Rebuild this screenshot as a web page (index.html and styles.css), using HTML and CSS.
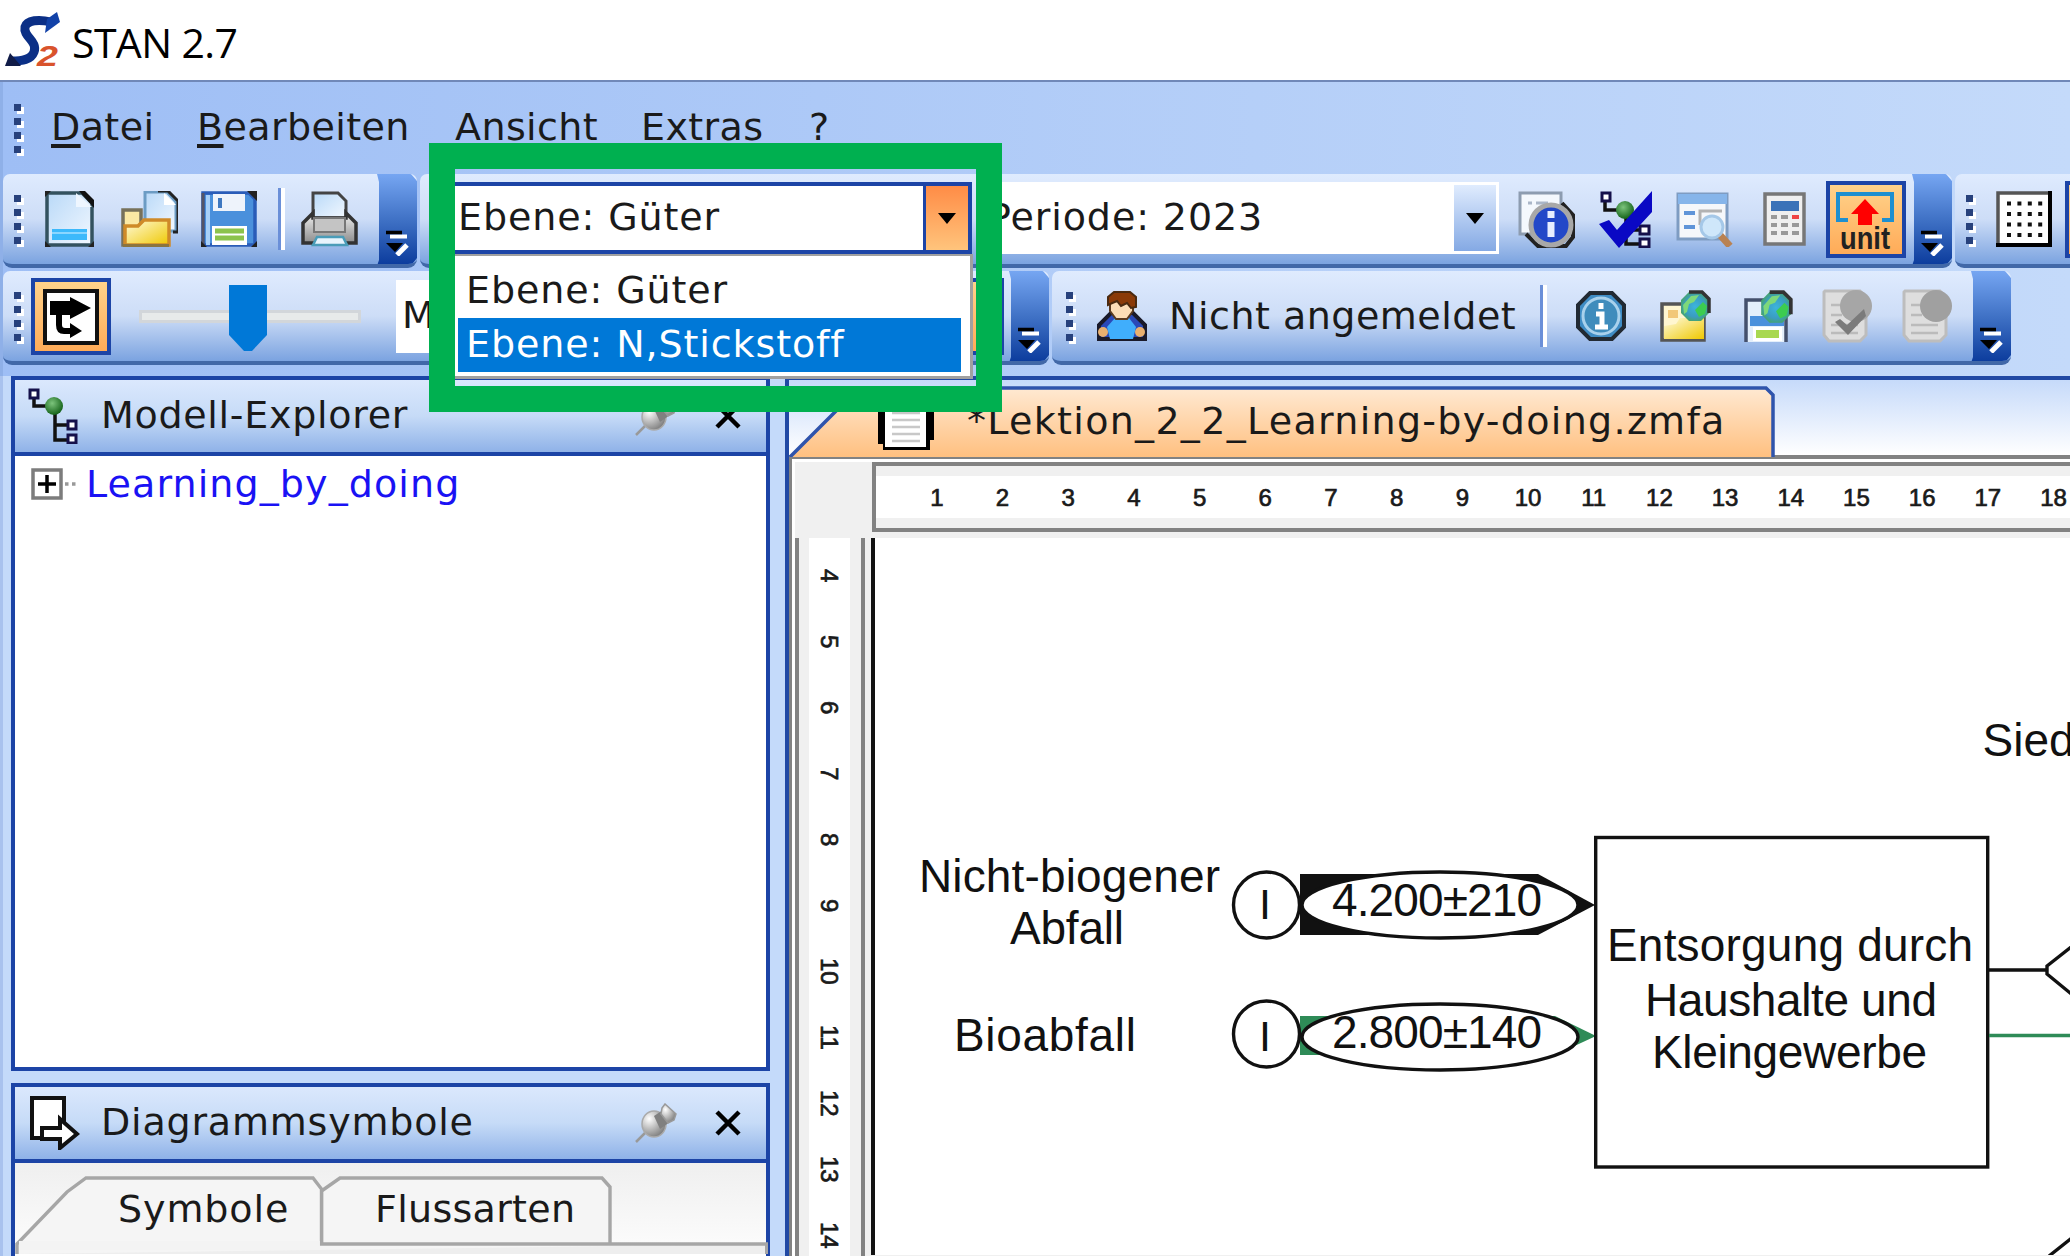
FILE: index.html
```html
<!DOCTYPE html>
<html lang="de">
<head>
<meta charset="utf-8">
<title>STAN 2.7</title>
<link rel="stylesheet" href="styles.css">
</head>
<body>
<svg class="defs" width="0" height="0" aria-hidden="true">
  <defs>
    <linearGradient id="paper" x1="0" y1="0" x2="1" y2="1"><stop offset="0" stop-color="#b9d9f8"/><stop offset="1" stop-color="#f2f8ff"/></linearGradient>
    <linearGradient id="yellow" x1="0" y1="0" x2="1" y2="1"><stop offset="0" stop-color="#fffbe0"/><stop offset="1" stop-color="#efc800"/></linearGradient>
    <linearGradient id="metal" x1="0" y1="0" x2="0" y2="1"><stop offset="0" stop-color="#f0f0f0"/><stop offset="1" stop-color="#8c8c8c"/></linearGradient>
    <radialGradient id="green" cx=".4" cy=".35" r=".7"><stop offset="0" stop-color="#7cc47c"/><stop offset="1" stop-color="#0d5c12"/></radialGradient>
    <radialGradient id="globe" cx=".5" cy=".5" r=".6"><stop offset="0" stop-color="#3cb4dc"/><stop offset=".6" stop-color="#3a9cc0"/><stop offset="1" stop-color="#4aa848"/></radialGradient>
    <radialGradient id="silver" cx=".3" cy=".3" r=".8"><stop offset="0" stop-color="#fff"/><stop offset="1" stop-color="#777"/></radialGradient>
  </defs>
  <symbol id="pin" viewBox="0 0 42 40">
    <path d="M1 39 12 28" stroke="#999" stroke-width="2.5"/>
    <ellipse cx="19" cy="21" rx="12" ry="13" fill="url(#silver)" stroke="#aaa" stroke-width="1.5"/>
    <path d="M19 13 28 7l7 12-10 7z" fill="#808080"/>
    <path d="M27 5 30 1 41 11 39 17 33 20 26 11z" fill="url(#silver)" stroke="#999" stroke-width="1.5"/>
  </symbol>
  <symbol id="close" viewBox="0 0 28 26"><path d="M3 2 25 24M25 2 3 24" stroke="#000" stroke-width="4.500"/></symbol>
  <symbol id="tree" viewBox="0 0 50 56">
    <path d="M6 10V18H24M27 20V52H40M27 37H40" fill="none" stroke="#111" stroke-width="3.5"/>
    <path d="M2 2h8v8h-8zM40 33h8v8h-8zM40 47h8v8h-8z" fill="#fff" stroke="#15104a" stroke-width="3"/>
    <circle cx="26" cy="18" r="9" fill="url(#green)"/>
  </symbol>
  <symbol id="globe-s" viewBox="0 0 32 34">
    <path d="M10 2h13l7 7v14l-8 8H10L2 23V10z" fill="url(#globe)"/>
    <path d="M10 2h13l7 7v14" fill="none" stroke="#333" stroke-width="3.500"/>
    <path d="M4 15 12 6l8-1-5 7-5 2-2 8-3 2z" fill="#7ed87a"/><path d="M16 20l8-8 4 4-2 8-6 3z" fill="#3ccc50"/>
  </symbol>
  <symbol id="more" viewBox="0 0 24 26"><path d="M5 6.500H22" stroke="#fff" stroke-width="4"/><path d="M1 2.500H17" stroke="#000" stroke-width="3.500"/><path d="M12 25 22 15" stroke="#fff" stroke-width="5"/><path d="M1 13H18L10 22z"/></symbol>
</svg>

<header class="titlebar">
  <svg class="logo" width="58" height="56" viewBox="0 0 58 56">
    <path d="M46 10C34 7 22 8 20 15c-2 10 13 14 9 25-3 8-12 9-22 9" fill="none" stroke="#0b2f86" stroke-width="9"/>
    <path d="M52 0 55 10 40 21 42 7z" fill="#1242a8"/>
    <path d="M0 54 5 41 16 54z" fill="#111c48"/>
    <text class="logo-digit" x="32" y="54" textLength="21" lengthAdjust="spacingAndGlyphs">2</text>
  </svg>
  <h1 class="title">STAN 2.7</h1>
</header>

<div class="dock">
  <nav class="menu">
    <span class="grip"><i></i><i></i><i></i><i></i></span>
    <span class="m m-file"><u>D</u>atei</span>
    <span class="m m-edit"><u>B</u>earbeiten</span>
    <span class="m m-view">Ansicht</span>
    <span class="m m-extra">Extras</span>
    <span class="m m-help"><u>?</u></span>
  </nav>

  <div class="row">
    <section class="bar bar-file">
      <span class="grip"><i></i><i></i><i></i><i></i></span>
      <svg class="i-new" width="49" height="56" viewBox="0 0 49 56">
        <path d="M2 2H37L47 12V54H2z" fill="url(#paper)" stroke="#33525f" stroke-width="3.5"/>
        <path d="M31 2V16H47z" fill="#eef6ff"/><path d="M34 0h6l9 9v8z" fill="#111"/>
        <path d="M7 38H42V49H7z" fill="#3cb9fb"/><path d="M7 42H42" stroke="#8ad6ff" stroke-width="2"/>
        <path d="M0 0h6l-6 6zM0 56v-6l6 6zM49 56h-6l6-6z" fill="#222"/>
      </svg>
      <svg class="i-open" width="57" height="56" viewBox="0 0 57 56">
        <path d="M24 1H46L55 11V40H24z" fill="url(#paper)" stroke="#6c9cc4" stroke-width="3"/>
        <path d="M37 0h10l10 10v31h-5" fill="none" stroke="#222" stroke-width="3"/><path d="M43 2v12h12z" fill="#fff"/>
        <path d="M2 19H20V54H2z" fill="#fbe9a4" stroke="#77715a" stroke-width="3.5"/>
        <path d="M4 54V35H17L23 29H48V54z" fill="url(#yellow)" stroke="#cf8a28" stroke-width="3.5"/>
        <path d="M2 54.500H48" stroke="#8a7440" stroke-width="3"/>
      </svg>
      <svg class="i-save" width="56" height="56" viewBox="0 0 56 56">
        <path d="M2 2H48L54 8V54H2z" fill="#4a90dc" stroke="#2a5cb8" stroke-width="3.5"/>
        <path d="M2 2V54" stroke="#556" stroke-width="3"/><path d="M7 4v50" stroke="#a8d0f8" stroke-width="4"/>
        <path d="M12 3H44V20H12z" fill="#eef3fb"/><path d="M19 7V17" stroke="#3f78c0" stroke-width="4"/>
        <path d="M11 35H46V54H11z" fill="#fff"/><path d="M14 40H43M14 47H43" stroke="#8cc34c" stroke-width="5"/>
        <path d="M46 0h10v10zM0 56v-6l6 6zM56 56v-6l-6 6z" fill="#222"/>
      </svg>
      <span class="sep"></span>
      <svg class="i-print" width="57" height="56" viewBox="0 0 57 56">
        <path d="M12 27V2H37L45 10V27z" fill="url(#paper)" stroke="#444" stroke-width="3"/>
        <path d="M2 52V32L12 22V27H45V22L55 32V52z" fill="url(#metal)" stroke="#333" stroke-width="3.5"/>
        <path d="M13 27H44V41H13z" fill="#c4c4c4" stroke="#777" stroke-width="2"/>
        <path d="M12 54 16 46H42L46 54z" fill="#e8f4fc" stroke="#4a9cb8" stroke-width="2.500"/>
      </svg>
      <span class="more"><svg width="24" height="26"><use href="#more"/></svg></span>
    </section>

    <section class="bar bar-layer">
      <div class="combo combo-open"><span class="combo-text">Ebene: Güter</span><span class="combo-btn"><i class="tri"></i></span></div>
      <div class="combo combo-period"><span class="combo-text">Periode: 2023</span><span class="combo-btn"><i class="tri"></i></span></div>
      <svg class="i-props" width="57" height="57" viewBox="0 0 57 57">
        <path d="M2 2H43V43H2z" fill="#f4f8fd" stroke="#8d9cb0" stroke-width="3"/><path d="M10 12h4M18 12h12" stroke="#aab6c8" stroke-width="3"/>
        <path d="M8 43 20 55H48L55 46V24L44 12" fill="none" stroke="#222" stroke-width="4"/>
        <circle cx="33" cy="34" r="20" fill="#2348c8" stroke="#a8a8a8" stroke-width="5"/>
        <path d="M33 20v7M33 31V46" stroke="#e8eeff" stroke-width="7"/>
      </svg>
      <svg class="i-check" width="56" height="58" viewBox="0 0 56 58">
        <path d="M6 10V20H24M27 20V54H42M27 40H42" fill="none" stroke="#111" stroke-width="3.5"/>
        <path d="M3 3h8v8h-8zM41 36h9v8h-9zM41 49h9v8h-9z" fill="#fff" stroke="#15104a" stroke-width="3"/>
        <circle cx="26" cy="20" r="9" fill="url(#green)"/>
        <path d="M0 34 10 30 18 40 53 1V22L20 58z" fill="#0a08c4"/>
      </svg>
      <svg class="i-form" width="57" height="56" viewBox="0 0 57 56">
        <path d="M2 3H51V48H2z" fill="#f5f7fa" stroke="#7e9cc2" stroke-width="3"/><path d="M2 3H51V13H2z" fill="#86b5ea"/>
        <path d="M8 22H19M8 36H19" stroke="#5f94d8" stroke-width="4"/><path d="M24 34V20H46" fill="none" stroke="#b2b2b2" stroke-width="3"/>
        <path d="M44 44 54 55" stroke="#b98252" stroke-width="7"/><circle cx="36" cy="36" r="11" fill="#cfe7fa" stroke="#a5c8e8" stroke-width="3"/>
      </svg>
      <svg class="i-calc" width="43" height="54" viewBox="0 0 43 54">
        <path d="M2 2H41V52H2z" fill="#efefef" stroke="#777" stroke-width="3.500"/><path d="M8 9H36V19H8z" fill="#3a72b8"/>
        <path d="M8 25h6M18 25h7M8 33h6M18 33h7M29 33h7M8 41h6M18 41h7M29 41h7" stroke="#999" stroke-width="4"/><path d="M29 25h7" stroke="#e44" stroke-width="4"/>
      </svg>
      <span class="toggle">
        <svg width="72" height="69" viewBox="0 0 72 69">
          <path d="M18 35H8V9H62V35H52" fill="none" stroke="#1e8fd0" stroke-width="4"/>
          <path d="M35 14 49 29H42V40H28V29H21z" fill="#f00"/>
          <text class="unit" x="10" y="64" textLength="50" lengthAdjust="spacingAndGlyphs">unit</text>
        </svg>
      </span>
      <span class="more"><svg width="24" height="26"><use href="#more"/></svg></span>
    </section>

    <section class="bar bar-grid">
      <span class="grip"><i></i><i></i><i></i><i></i></span>
      <svg class="i-grid" width="56" height="56" viewBox="0 0 56 56">
        <path d="M2 2H54V54H2z" fill="#fff" stroke="#555" stroke-width="3.500"/><path d="M54 0V54H0" fill="none" stroke="#000" stroke-width="4"/>
        <path d="M11 12.500H47M11 23H47M11 33.500H47M11 44H47" stroke="#111" stroke-width="4" stroke-dasharray="4 6.400"/>
      </svg>
      <span class="toggle toggle-cut"></span>
    </section>
  </div>

  <div class="row">
    <section class="bar bar-flow">
      <span class="grip"><i></i><i></i><i></i><i></i></span>
      <span class="toggle toggle-flow">
        <svg width="56" height="56" viewBox="0 0 56 56"><path d="M2 2H54V54H2z" fill="#fff" stroke="#111" stroke-width="4"/><path d="M7 12H27V8L48 19 27 30V26H19V36Q19 39 22 39H27V34L39 42 27 49V45H21Q13 45 13 36V26H7z"/></svg>
      </span>
      <span class="slider"><svg class="thumb" width="38" height="66" viewBox="0 0 38 66"><path d="M0 0H38V50L23 66H15L0 50z" fill="#0078d7"/></svg></span>
      <span class="field">M</span>
      <span class="toggle toggle-last"></span>
      <span class="more"><svg width="24" height="26"><use href="#more"/></svg></span>
    </section>

    <section class="bar bar-user">
      <span class="grip"><i></i><i></i><i></i><i></i></span>
      <svg class="i-user" width="50" height="50" viewBox="0 0 50 50">
        <path d="M2 48V34L14 22H36L48 34V48z" fill="#2a49b8" stroke="#1a1a2a" stroke-width="4"/>
        <circle cx="6" cy="41" r="5" fill="#e8b070"/><circle cx="43" cy="41" r="5" fill="#e8b070"/>
        <path d="M10 36 18 27H32L39 36 36 48H13z" fill="#40aefc"/>
        <path d="M13 8H36V20L30 28H19L13 20z" fill="#fbdcb6" stroke="#5a3a20" stroke-width="2"/>
        <path d="M11 14V6L17 1H33L39 6V16L34 17 30 12 24 15 20 10z" fill="#8a3a08" stroke="#4a2a10" stroke-width="2"/>
      </svg>
      <span class="user-name">Nicht angemeldet</span>
      <span class="sep"></span>
      <svg class="i-info" width="50" height="50" viewBox="0 0 50 50">
        <path d="M14 2H36L48 14V36L36 48H14L2 36V14z" fill="#3f8cc4" stroke="#222a33" stroke-width="4"/><circle cx="25" cy="25" r="18" fill="#3f8cbc" stroke="#a9d1ec" stroke-width="3"/>
        <path d="M25 12v6M20 23h6v12M19 36h13" fill="none" stroke="#fff" stroke-width="5"/>
      </svg>
      <svg class="i-fglobe" width="52" height="52" viewBox="0 0 52 52">
        <path d="M2 14H44V50H2z" fill="#fff6d0" stroke="#555" stroke-width="3.500"/><path d="M8 20h10v8H8z" fill="#f2c878"/><path d="M4 49V36L16 34 20 28H44V49z" fill="url(#yellow)"/>
        <use href="#globe-s" x="19" y="0" width="32" height="34"/>
      </svg>
      <svg class="i-sglobe" width="50" height="52" viewBox="0 0 50 52">
        <path d="M2 52V10H42V52" fill="#e4effb" stroke="#44506c" stroke-width="3.500"/><path d="M6 26H40V36H6z" fill="#4a90dc"/><path d="M9 37H38V51H9z" fill="#fff"/><path d="M12 44H35" stroke="#a8d850" stroke-width="8"/>
        <use href="#globe-s" x="15" y="0" width="34" height="36"/>
      </svg>
      <svg class="i-pcheck" width="52" height="54" viewBox="0 0 52 54">
        <path d="M3 2H38L44 8V46L38 52H7L2 46V3z" fill="#dedede" stroke="#bdbdbd" stroke-width="3"/><path d="M9 16H22M9 26H20M9 36H36M9 44H36" stroke="#bbb" stroke-width="2.500"/>
        <circle cx="34" cy="17" r="16" fill="#a6a6a6"/><path d="M13 33 18 30 25 36 42 20 44 27 26 46z" fill="#7b7b7b"/>
      </svg>
      <svg class="i-page" width="52" height="54" viewBox="0 0 52 54">
        <path d="M3 2H38L44 8V46L38 52H7L2 46V3z" fill="#dedede" stroke="#bdbdbd" stroke-width="3"/><path d="M9 16H22M9 26H20M9 36H36M9 44H36" stroke="#bbb" stroke-width="2.500"/>
        <circle cx="34" cy="17" r="16" fill="#a0a0a0"/>
      </svg>
      <span class="more"><svg width="24" height="26"><use href="#more"/></svg></span>
    </section>
  </div>
</div>

<main class="work">
  <aside class="side">
    <section class="panel panel-model">
      <header class="panel-head">
        <svg class="i-tree" width="50" height="56"><use href="#tree"/></svg>
        <h2 class="panel-title">Modell-Explorer</h2>
        <svg class="i-pin" width="42" height="40"><use href="#pin"/></svg>
        <svg class="i-close" width="28" height="26"><use href="#close"/></svg>
      </header>
      <div class="tree-row">
        <svg width="46" height="32" viewBox="0 0 46 32"><path d="M2 2H30V30H2z" fill="#fff" stroke="#7c7c7c" stroke-width="3.500"/><path d="M7 16H25M16 7V25" stroke="#000" stroke-width="3.500"/><path d="M34 16h3.500M41 16h3.500" stroke="#999" stroke-width="3.500"/></svg>
        <span class="tree-label">Learning_by_doing</span>
      </div>
    </section>
    <section class="panel panel-symbols">
      <header class="panel-head">
        <svg class="i-shape" width="50" height="54" viewBox="0 0 50 54"><path d="M2 2H34V42H2z" fill="#fff" stroke="#111" stroke-width="4"/><path d="M12 32H30V23L47 38 30 52V43H12z" fill="#fff" stroke="#111" stroke-width="4"/></svg>
        <h2 class="panel-title">Diagrammsymbole</h2>
        <svg class="i-pin" width="42" height="40"><use href="#pin"/></svg>
        <svg class="i-close" width="28" height="26"><use href="#close"/></svg>
      </header>
      <div class="tabs">
        <svg class="tabs-shape" width="753" height="91" viewBox="14 1165 753 91">
          <path d="M14 1247H767V1256H14z" fill="#eeeeee"/>
          <path class="tab-edge" d="M320.500 1246V1193L339 1180H601L609 1189V1246"/>
          <path class="tab-edge" d="M16 1256V1246L66 1194 85 1180H312L320.500 1191V1246H767"/>
          <path d="M765.500 1246V1256" stroke="#a6a6a6" stroke-width="3"/>
          <path d="M18 1243H318.800V1252H18z" fill="#f3f3f3"/>
        </svg>
        <span class="tab tab-1">Symbole</span><span class="tab tab-2">Flussarten</span>
      </div>
    </section>
  </aside>

  <section class="doc">
    <div class="doc-tabs">
      <svg class="doc-shape" width="987" height="72" viewBox="789 386 987 72">
        <defs><linearGradient id="peach" x1="0" y1="0" x2="0" y2="1"><stop offset="0" stop-color="#ffe9d2"/><stop offset="1" stop-color="#ffc080"/></linearGradient></defs>
        <path d="M790 458 846 402Q860 389 872 389H1766L1773 396V458" fill="url(#peach)" stroke="#2f54ac" stroke-width="3.500"/>
        <path d="M878 398H934V441H930V451H883V445H878z"/><path d="M885 398H926V448H885z" fill="#fff"/>
        <path d="M892 407H920M892 414H920M892 421H920M892 428H920M892 435H920M892 442H920" stroke="#c8c8c8" stroke-width="2.500"/>
      </svg>
      <span class="doc-name">*Lektion_2_2_Learning-by-doing.zmfa</span>
    </div>
    <div class="sheet">
      <div class="hruler">
        <div class="scale"><b>1</b><b>2</b><b>3</b><b>4</b><b>5</b><b>6</b><b>7</b><b>8</b><b>9</b><b>10</b><b>11</b><b>12</b><b>13</b><b>14</b><b>15</b><b>16</b><b>17</b><b>18</b></div>
      </div>
      <div class="page">
        <div class="vruler"><b>4</b><b>5</b><b>6</b><b>7</b><b>8</b><b>9</b><b>10</b><b>11</b><b>12</b><b>13</b><b>14</b></div>
        <svg class="diagram" width="1199" height="717" viewBox="871 540 1199 717">
          <path d="M873 539V1257" stroke="#111" stroke-width="4"/>
          <text x="1982.500" y="757.500">Sied</text>
          <text x="919" y="893.500" textLength="301">Nicht-biogener</text>
          <text x="1010" y="945.500" textLength="114">Abfall</text>
          <text x="954" y="1053" textLength="182">Bioabfall</text>
          <path d="M1300 876H1538L1595 907 1538 937H1300z"/>
          <path d="M1300 1018H1555L1596 1038 1555 1057H1300z" fill="#2e8b57"/>
          <g class="line">
            <circle cx="1266.500" cy="907" r="33"/><circle cx="1266.500" cy="1036" r="33"/>
            <ellipse cx="1440" cy="907" rx="138" ry="33"/><ellipse cx="1440" cy="1039" rx="138" ry="33"/>
            <rect x="1595.700" y="839.500" width="392" height="329.500"/>
            <path d="M1989 972H2047M2075 946 2047 968V976L2075 999M2049 1258 2073 1239"/>
          </g>
          <path d="M1989 1037.500H2070" stroke="#2e8b57" stroke-width="3.500"/>
          <text x="1259" y="921" font-size="43">I</text><text x="1259" y="1053" font-size="43">I</text>
          <text x="1332" y="917.500" textLength="210">4.200±210</text>
          <text x="1332" y="1050" textLength="210">2.800±140</text>
          <text x="1607" y="963" textLength="366">Entsorgung durch</text>
          <text x="1645" y="1018" textLength="292">Haushalte und</text>
          <text x="1652" y="1070" textLength="275">Kleingewerbe</text>
        </svg>
      </div>
    </div>
  </section>
</main>

<ul class="dropdown"><li>Ebene: Güter</li><li class="on">Ebene: N,Stickstoff</li></ul>
<div class="highlight"></div>
</body>
</html>
```
FILE: styles.css
```css
* { box-sizing: border-box; }
body {
  margin: 0;
  width: 2070px;
  height: 1256px;
  overflow: hidden;
  position: relative;
  background: #c4dafa;
  font: 38px/48px "DejaVu Sans", Verdana, sans-serif;
  letter-spacing: 0.9px;
  color: #1a1a1a;
}
svg { display: block; flex: none; }
h1, h2, ul { margin: 0; padding: 0; font-weight: normal; }
.defs { position: absolute; }

.titlebar { display: flex; align-items: center; height: 82px; padding-left: 5px; background: #fff; border-bottom: 2px solid #7088b8; }
.logo { overflow: visible; }
.logo-digit { font: italic bold 29px "Liberation Sans", sans-serif; letter-spacing: 0; fill: #d9532c; }
.title { margin-left: 9px; padding-top: 3px; font: 41px/56px "Open Sans", "Noto Sans", sans-serif; letter-spacing: -0.6px; color: #000; }

.dock { height: 294px; background: linear-gradient(90deg, #9ebef5, #c4dafa); border-left: 3px solid #8fb0e8; padding-bottom: 11px; }
.menu { display: flex; align-items: center; height: 92px; letter-spacing: 0.4px; }
.menu .grip { margin-left: 11px; }
.m { flex: none; position: relative; top: -1px; }
.m-file { margin-left: 27px; width: 146px; }
.m-edit { width: 258px; }
.m-view { width: 186px; }
.m-extra { width: 168px; }
u { text-decoration-thickness: 4px; text-underline-offset: 4px; }

.grip { display: flex; flex-direction: column; gap: 7px; width: 10px; flex: none; }
.grip i { width: 7px; height: 7px; background: #27417c; box-shadow: 3px 3px 0 #fff; }

.row { display: flex; gap: 3px; height: 97px; }
.bar {
  display: flex; align-items: center; flex: none; height: 94px; overflow: hidden;
  border-radius: 7px 7px 9px 9px; border-bottom: 4px solid #4168a8;
  background: linear-gradient(#dfebfe, #cdddf7 50%, #7ba3e0);
}
.bar .grip { margin-left: 11px; }
.bar-file { width: 414px; }
.bar-layer { width: 1532px; }
.bar-grid { width: 130px; }
.bar-flow { width: 1046px; }
.bar-user { width: 959px; }
.more {
  width: 40px; height: 94px; margin: 0 0 -4px auto; padding: 56px 0 0 8px; flex: none;
  background: linear-gradient(#76a6f2, #3e70c4 50%, #08389a);
  clip-path: polygon(0 0, 34px 0, 100% 7px, 100% 84px, 32px 100%, 0 100%, 0 92px, 2px 86px, 2px 8px);
}
.sep { width: 7px; height: 62px; flex: none; border-left: 3px solid #6a8fd8; border-right: 4px solid #fff; }

.i-new { margin-left: 21px; }
.i-open { margin-left: 27px; }
.i-save { margin-left: 23px; }
.bar-file .sep { margin-left: 21px; }
.i-print { margin-left: 16px; }

.combo { display: flex; flex: none; height: 72px; margin-top: -2px; background: #fff; }
.combo-open { margin-left: 28px; width: 524px; border: 4px solid #1c44a6; border-left-width: 3px; }
.combo-period { margin-left: 7px; width: 520px; padding: 3px; }
.combo-text { flex: 1; line-height: 63px; padding-left: 7px; }
.combo-btn { display: flex; align-items: center; justify-content: center; width: 42px; background: linear-gradient(#e0ecfe, #84a9e4); }
.combo-open .combo-btn { width: 45px; border-left: 3px solid #1c44a6; background: linear-gradient(#ff8c46, #ffc47c); }
.combo-period .combo-text { padding-left: 6px; line-height: 65px; }
.tri { border: 9px solid transparent; border-top: 11px solid #000; border-bottom: 0; }
.i-props { margin-left: 19px; }
.i-check { margin-left: 24px; }
.i-form { margin-left: 21px; }
.i-calc { margin-left: 30px; }
.toggle { display: block; flex: none; width: 80px; height: 77px; margin-left: 20px; border: 4px solid #1c44a6; background: linear-gradient(#ffd28a, #ffab58); }
.unit { font: bold 31px "Liberation Sans", sans-serif; letter-spacing: 0; fill: #222; }
.i-grid { margin-left: 20px; }
.toggle-cut { margin-left: 13px; }

.bar-flow .toggle-flow { margin-left: 7px; padding: 7px 8px; }
.slider { display: block; position: relative; width: 222px; height: 13px; margin-left: 28px; flex: none; background: #e7eaea; border: 3px solid #d2d6da; }
.thumb { position: absolute; left: 87px; top: -28px; }
.field { width: 120px; height: 73px; margin-left: 35px; padding-left: 6px; line-height: 70px; background: #fff; flex: none; }
.toggle-last { margin-left: 408px; }

.bar-user .grip { margin-left: 14px; }
.i-user { margin-left: 21px; }
.user-name { margin-left: 22px; width: 371px; letter-spacing: 0.5px; }
.i-info { margin-left: 29px; }
.i-fglobe { margin-left: 34px; }
.i-sglobe { margin-left: 32px; }
.i-pcheck { margin-left: 28px; }
.i-page { margin-left: 28px; }

.work { display: flex; height: 880px; border-left: 3px solid #a9c2ee; }
.side { display: flex; flex-direction: column; gap: 12px; width: 767px; padding-left: 8px; flex: none; }
.panel { border: 4px solid #1c44a6; background: #fff; }
.panel-model { height: 695px; }
.panel-symbols { flex: 1; border-bottom: 0; }
.panel-head { display: flex; align-items: center; height: 76px; padding: 0 24px 0 13px; border-bottom: 4px solid #1c44a6; background: linear-gradient(#dbe8fd, #c6dbf7 50%, #8fb2e8); }
.panel-title { font-size: 38px; line-height: 46px; margin: -3px 0 0 23px; flex: 1; letter-spacing: 0.7px; }
.panel-symbols .panel-title { letter-spacing: 0.8px; }
.i-shape { margin-left: 2px; }
.i-shape + .panel-title { margin-left: 21px; }
.i-close { margin-left: 37px; }
.tree-row { display: flex; align-items: center; gap: 9px; padding: 4px 0 0 16px; }
.tree-label { color: #1a12f4; letter-spacing: 1.1px; }
.tabs { position: relative; display: flex; height: 91px; padding-top: 22px; background: linear-gradient(#efefef, #fdfdfd); }
.tabs-shape { position: absolute; left: 0; top: 0; }
.tab-edge { fill: #f5f5f5; stroke: #a6a6a6; stroke-width: 3.4px; }
.tab { position: relative; }
.tab-1 { width: 257px; margin-left: 103px; }
.tab-2 { letter-spacing: 0.3px; }

.doc { flex: 1; margin-left: 15px; border: solid #2149a4; border-width: 4px 0 0 4px; display: flex; flex-direction: column; }
.doc-tabs { position: relative; height: 75px; background: linear-gradient(#c6dafa, #fff); padding: 17px 0 0 178px; }
.doc-shape { position: absolute; left: 0; top: 5px; }
.doc-name { position: relative; letter-spacing: 1.3px; white-space: nowrap; }
.sheet { flex: 1; border: solid #828282; border-width: 4px 0 0 3px; background: #f0f0f0; padding-top: 3px; box-shadow: inset 3px 3px #fff; }
.hruler { margin-left: 80px; height: 70px; border: solid #828282; border-width: 4px 0 4px 4px; padding: 10px 0 8px; }
.scale { display: flex; height: 42px; background: #fff; padding-left: 28px; overflow: hidden; }
.hruler b, .vruler b { flex: none; font: 24px/44px "Liberation Sans", Arial, sans-serif; letter-spacing: 0; text-align: center; -webkit-text-stroke: 0.7px #1a1a1a; }
.scale b { width: 65.700px; }
.page { display: flex; margin-top: 6px; }
.vruler { width: 70px; height: 718px; margin: 0 6px 0 3px; border: solid #828282; border-width: 0 4px; padding: 5px 0 0; background: linear-gradient(90deg, #f0f0f0 10px, #fff 10px 51px, #f0f0f0 51px); writing-mode: vertical-rl; display: flex; align-items: center; }
.vruler b { height: 65.900px; width: 44px; transform: translateX(-1.500px); }
.diagram { background: #fff; font: 46px "Liberation Sans", Arial, sans-serif; letter-spacing: 0; fill: #111; }
.line { fill: #fff; stroke: #111; stroke-width: 3.400px; }
.line path { fill: none; }

.dropdown { position: absolute; left: 452px; top: 254px; width: 521px; height: 125px; padding: 8px 9px 0 6px; list-style: none; background: #fff; border: solid #a0a0a0; border-width: 2px 3px 3px 0; }
.dropdown li { height: 54px; line-height: 52px; padding-left: 8px; }
.dropdown .on { background: #0078d7; color: #fff; }
.highlight { position: absolute; left: 429px; top: 143px; width: 573px; height: 269px; border: 26.500px solid #00b050; }
```
